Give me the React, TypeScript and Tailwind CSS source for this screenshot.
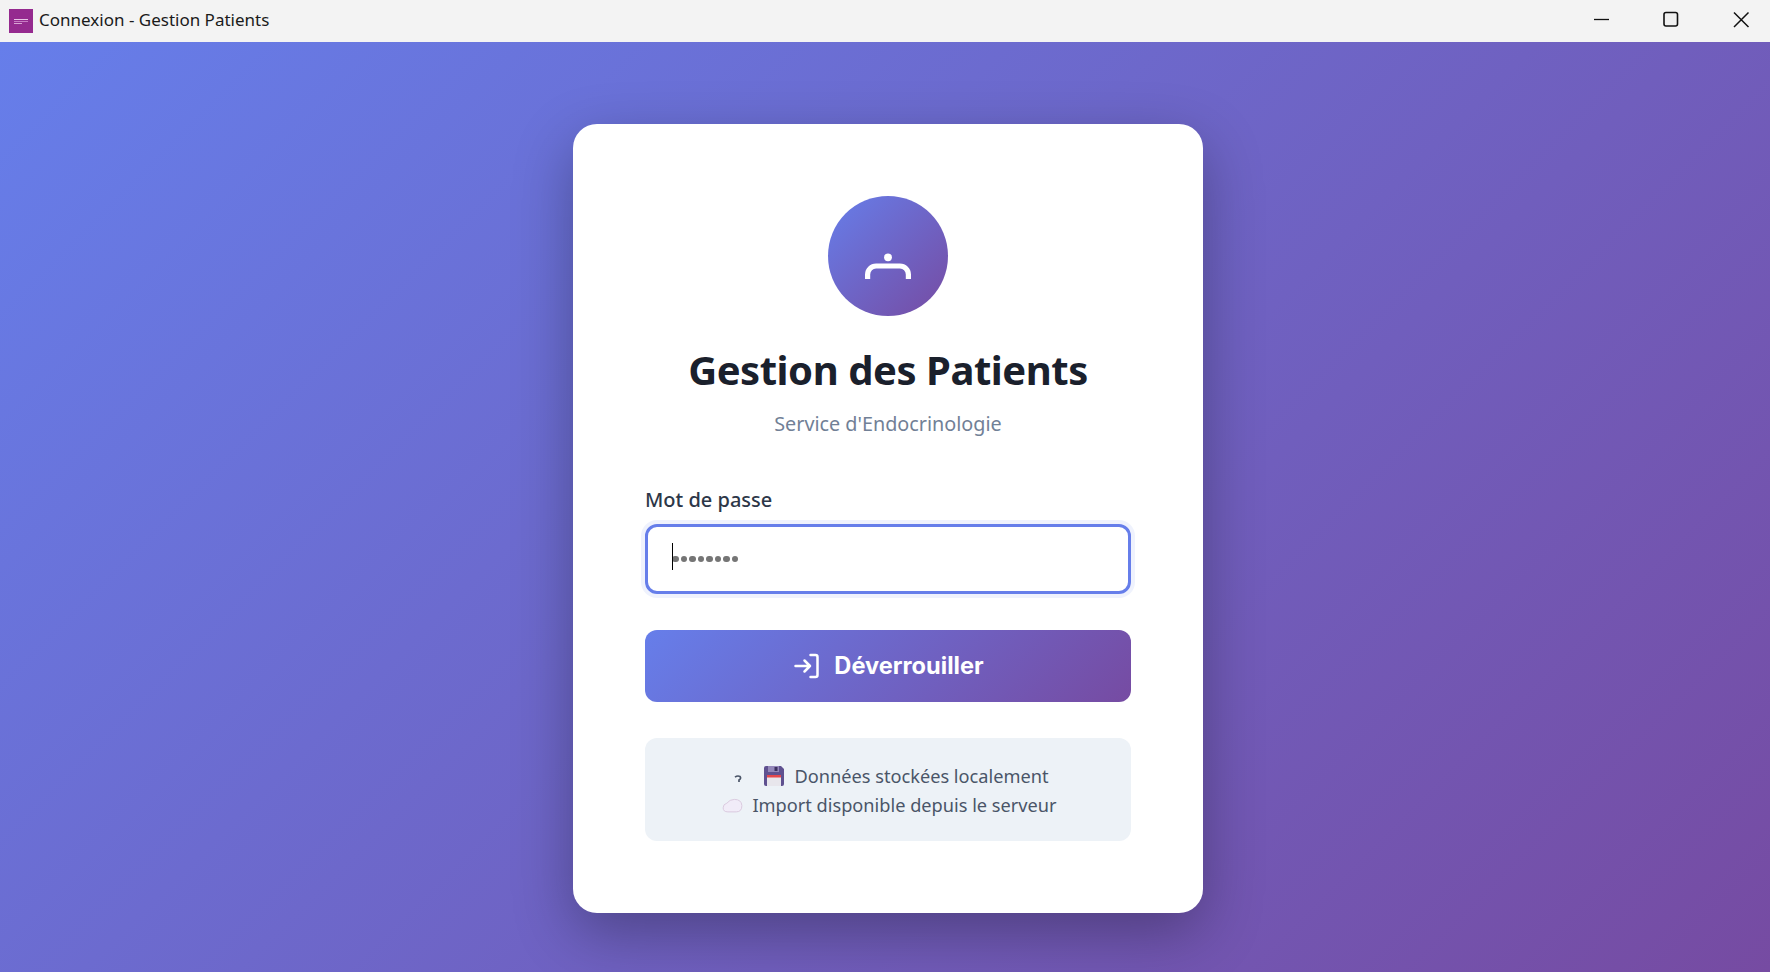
import React from "react";

const ui = '"Noto Sans", "Open Sans", sans-serif';

export default function App() {
  return (
    <div className="flex h-[972px] w-[1770px] flex-col overflow-hidden" style={{ fontFamily: ui }}>
      <header className="flex h-[42px] shrink-0 items-center bg-[#f3f3f3] pl-[9px]">
        <div className="flex h-6 w-6 flex-col items-center justify-center gap-[1px] bg-[#952a8f]">
          <div className="h-[1px] w-[14px] bg-[#e8c6e6]" />
          <div className="h-[1px] w-[14px] bg-[#c77cc3]" />
          <div className="ml-[5px] h-[1px] w-[8px] self-start bg-[#d8a4d4]" />
        </div>
        <span className="mb-[3px] ml-[6px] text-[17px] leading-none text-[#1a1a1a]">Connexion - Gestion Patients</span>
        <div className="ml-auto flex items-center">
          <svg width="200" height="42" viewBox="0 0 200 42" fill="none" stroke="#111" strokeWidth="1.3">
            <path d="M24 19.5H39" />
            <rect x="94" y="12.5" width="13.5" height="13.5" rx="2" strokeWidth="1.6" fill="#f0f0f0" />
            <path d="M164 12.5L178.5 27M178.5 12.5L164 27" strokeWidth="1.5" />
          </svg>
        </div>
      </header>
      <main className="flex flex-1 justify-center bg-[linear-gradient(135deg,#667eea_0%,#764ba2_100%)] pt-[82px] pl-[6px]">
        <section className="flex h-[789px] w-[630px] flex-col items-center rounded-3xl bg-white p-[72px] shadow-[0_20px_60px_rgba(0,0,0,0.3)]">
          <div className="flex h-[120px] w-[120px] items-center justify-center rounded-full bg-[linear-gradient(135deg,#667eea_0%,#764ba2_100%)]">
            <svg width="48" height="48" viewBox="0 0 48 48" fill="none">
              <path d="M3.6 47V42.5A8.5 8.5 0 0 1 12.1 34H35.9A8.5 8.5 0 0 1 44.4 42.5V47" stroke="#fff" strokeWidth="5.2" />
              <circle cx="24" cy="25.3" r="3.9" fill="#fff" />
            </svg>
          </div>
          <h1 className="mt-[27px] text-[40px] leading-[54px] font-bold tracking-[-0.45px] text-[#1a202c]">Gestion des Patients</h1>
          <p className="mt-[14px] text-[19.8px] leading-[26px] text-[#718096]">Service d'Endocrinologie</p>
          <label className="mt-[50px] w-full text-[20px] leading-[26px] font-medium text-[#2d3748]">Mot de passe</label>
          <div className="mt-[11px] flex h-[70px] w-full items-center rounded-xl border-[3px] border-[#667eea] pl-[24px] shadow-[0_0_0_4px_rgba(102,126,234,0.1)]">
            <div className="relative flex items-center gap-[2px]">
              <span className="absolute top-[-13px] left-0 h-[27px] w-[1px] bg-black" />
              {[0, 1, 2, 3, 4, 5, 6, 7].map((i) => (
                <span key={i} className="h-[6.5px] w-[6.5px] rounded-full bg-[#757575]" />
              ))}
            </div>
          </div>
          <button className="mt-[36px] flex h-[72px] w-full items-center justify-center gap-[14px] rounded-xl bg-[linear-gradient(135deg,#667eea_0%,#764ba2_100%)] pl-[2px] text-[23.6px] font-bold text-white" style={{ fontFamily: "Inter, sans-serif" }}>
            <svg width="26" height="26" viewBox="0 0 26 26" fill="none" stroke="#fff" strokeWidth="2.5" strokeLinecap="round" strokeLinejoin="round">
              <path d="M1.5 13H16M10.5 7.5L16 13L10.5 18.5" />
              <path d="M16.5 2H21.5Q23.5 2 23.5 4V22Q23.5 24 21.5 24H16.5" />
            </svg>
            Déverrouiller
          </button>
          <div className="mt-[36px] flex h-[103px] w-full flex-col items-center justify-center rounded-xl bg-[#edf2f7] pt-[2px] text-[18.2px] leading-[29px] text-[#4a5568]">
            <div className="flex items-center pl-[7px]">
              <svg width="8" height="8" viewBox="0 0 8 8" fill="none" className="mt-[5px] mr-[22px]">
                <path d="M1 2.2Q3.5 0.2 6 1.5Q7.5 3.5 5 5V7" stroke="#4a5568" strokeWidth="1.7" />
              </svg>
              <svg width="20" height="20" viewBox="1 1 20 20" className="mr-[10px]">
                <path d="M1 3Q1 1 3 1H18L21 4V19Q21 21 19 21H3Q1 21 1 19Z" fill="#5f5190" />
                <rect x="5" y="1" width="11" height="6" fill="#9488ba" />
                <rect x="11.5" y="2" width="3" height="4" fill="#3d3160" />
                <rect x="4" y="10" width="14" height="11" fill="#e8e6ec" />
                <rect x="4" y="10" width="14" height="2.5" fill="#e5484d" />
              </svg>
              <span>Données stockées localement</span>
            </div>
            <div className="flex items-center pl-[3px]">
              <svg width="21" height="15" viewBox="0 0 22 16" className="mt-[1px] mr-[9px]">
                <path d="M6 14.8Q1 14.8 1 10.5Q1 6.5 5 5.5Q8 1.5 13 1.5Q20.5 1.5 21 8Q21 14.8 15 14.8Z" fill="#f1ecf8" stroke="#d9c8dd" strokeWidth="1" />
              </svg>
              <span>Import disponible depuis le serveur</span>
            </div>
          </div>
        </section>
      </main>
    </div>
  );
}
